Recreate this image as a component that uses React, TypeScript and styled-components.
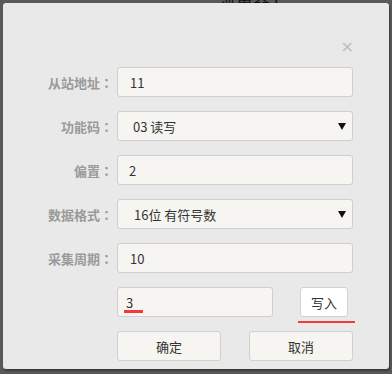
import React from "react";
import styled, { createGlobalStyle } from "styled-components";

const GlobalStyle = createGlobalStyle`
  html, body {
    margin: 0;
    padding: 0;
    background: #595959;
    font-family: "Noto Sans CJK SC", "Liberation Sans", sans-serif;
  }
`;

const Screen = styled.div`
  position: relative;
  width: 392px;
  height: 374px;
  padding: 3px 3px 0 3px;
  box-sizing: border-box;
  overflow: hidden;
`;

// title of the page underneath, mostly hidden by the dialog
const BehindTitle = styled.div`
  position: absolute;
  left: 219px;
  top: -14px;
  font-size: 17px;
  color: #111;
`;

const Dialog = styled.div`
  position: relative;
  width: 386px;
  height: 366px;
  background: #e9e9e9;
  border-radius: 3px;
  box-shadow: 1px 2px 2px rgba(0, 0, 0, 0.35);
  display: flex;
  flex-direction: column;
  box-sizing: border-box;
  padding-right: 37px;
`;

const Header = styled.div`
  height: 64px;
  display: flex;
  justify-content: flex-end;
  align-items: flex-start;
`;

const Close = styled.span`
  margin-top: 36px;
  margin-right: -2px;
  font-size: 16px;
  line-height: 16px;
  color: #bcbcbc;
  font-family: "DejaVu Sans", sans-serif;
`;

const Form = styled.div`
  display: grid;
  grid-template-columns: 110px 1fr;
  column-gap: 4px;
  row-gap: 14px;
`;

const Label = styled.label`
  height: 30px;
  display: flex;
  align-items: center;
  justify-content: flex-end;
  font-size: 13px;
  font-weight: bold;
  color: #9a9a9a;
`;

const Colon = styled.span`
  font-family: "Noto Sans CJK JP", sans-serif;
`;

const Field = styled.div<{ $select?: boolean; $pad?: number }>`
  position: relative;
  height: 30px;
  box-sizing: border-box;
  border: 1px solid #cfcfcf;
  border-radius: 3px;
  background: #f6f5f1;
  display: flex;
  align-items: center;
  padding-left: ${(p) => p.$pad ?? 12}px;
  font-size: 13px;
  color: #333;
  ${(p) =>
    p.$select &&
    `
    &::after {
      content: "";
      position: absolute;
      right: 6px;
      top: 11px;
      border-left: 4px solid transparent;
      border-right: 4px solid transparent;
      border-top: 7px solid #111;
    }
  `}
`;

const WriteRow = styled.div`
  display: flex;
  align-items: center;
`;

const WriteInput = styled(Field)`
  width: 156px;
`;

const Mark = styled.span<{ $w: number; $h: number; $bottom: number; $left: number }>`
  position: absolute;
  left: ${(p) => p.$left}px;
  bottom: ${(p) => p.$bottom}px;
  width: ${(p) => p.$w}px;
  height: ${(p) => p.$h}px;
  background: #f23a3a;
`;

const SmallBtn = styled.button`
  position: relative;
  margin-left: 27px;
  width: 48px;
  height: 30px;
  border: 1px solid #d2d2d2;
  border-radius: 3px;
  background: #fff;
  font-family: inherit;
  font-size: 13px;
  color: #333;
  padding: 0;
`;

const Actions = styled.div`
  display: flex;
  gap: 28px;
`;

const Btn = styled.button`
  width: 104px;
  height: 30px;
  border: 1px solid #d0d0d0;
  border-radius: 3px;
  background: #f6f5f1;
  font-family: inherit;
  font-size: 13px;
  color: #333;
  padding: 0;
`;

export default function App() {
  return (
    <>
      <GlobalStyle />
      <Screen>
        <BehindTitle>流量器 F</BehindTitle>
        <Dialog>
          <Header>
            <Close>×</Close>
          </Header>
          <Form>
            <Label>从站地址<Colon>：</Colon></Label>
            <Field>11</Field>
            <Label>功能码<Colon>：</Colon></Label>
            <Field $select $pad={15}>03 读写</Field>
            <Label>偏置<Colon>：</Colon></Label>
            <Field $pad={11}>2</Field>
            <Label>数据格式<Colon>：</Colon></Label>
            <Field $select $pad={16}>16位 有符号数</Field>
            <Label>采集周期<Colon>：</Colon></Label>
            <Field>10</Field>
            <span />
            <WriteRow>
              <WriteInput $pad={8}>
                3
                <Mark $left={6} $bottom={3} $w={19} $h={3} />
              </WriteInput>
              <SmallBtn>
                写入
                <Mark $left={-3} $bottom={-7} $w={57} $h={2} />
              </SmallBtn>
            </WriteRow>
            <span />
            <Actions>
              <Btn>确定</Btn>
              <Btn>取消</Btn>
            </Actions>
          </Form>
        </Dialog>
      </Screen>
    </>
  );
}
